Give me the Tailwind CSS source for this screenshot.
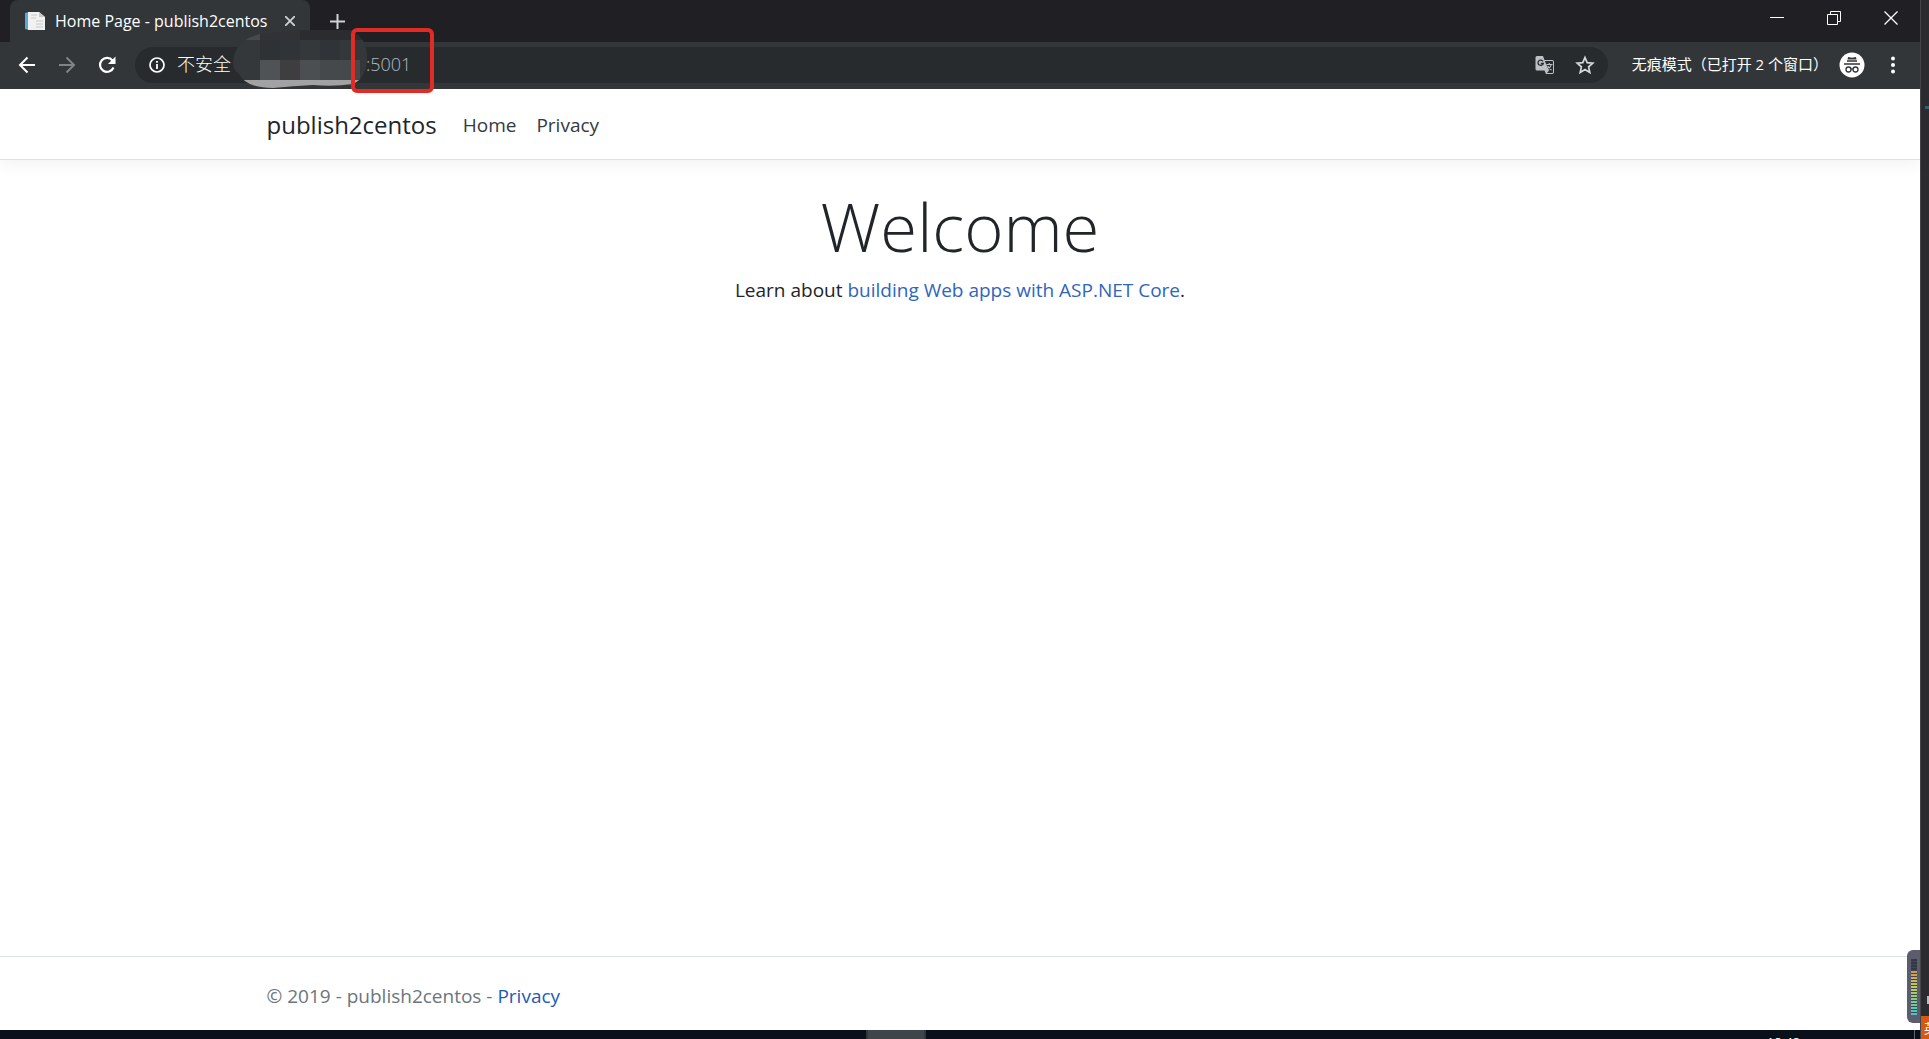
<!DOCTYPE html>
<html lang="zh-CN">
<head>
<meta charset="utf-8">
<title>Home Page - publish2centos</title>
<script src="https://cdn.jsdelivr.net/npm/@tailwindcss/browser@4"></script>
</head>
<body class="flex h-screen overflow-hidden bg-[#2c2c2f] font-['Open_Sans','Noto_Sans_CJK_SC',sans-serif]">
<div class="relative flex min-w-0 flex-1 flex-col">

  <!-- Browser chrome -->
  <div class="relative shrink-0 text-white">
    <div class="flex h-[42px] items-stretch bg-[#202024] pr-px pl-[10px]">
      <div class="flex w-[300px] items-center rounded-t-lg bg-[#323639] pr-3 pl-[14px]">
        <svg class="h-5 w-[22px] shrink-0" viewBox="0 0 22 20"><path d="M1 2l4-1v18l-4-1z" fill="#5aa9d6"/><path d="M4 1h11l6 5v13H4z" fill="#f1f1f1"/><path d="M15 1v5h6" fill="#c9c9c9"/><path d="M7 4h6M7 7h5M12 10h7M12 13h7M12 16h7" stroke="#c4c9cc"/></svg>
        <span class="ml-[9px] min-w-0 flex-1 text-[16px] whitespace-nowrap">Home Page - publish2centos</span>
        <button class="grid size-4 place-items-center" aria-label="关闭标签页"><svg class="size-[10px]" viewBox="0 0 10 10"><path d="M0 0l10 10M10 0L0 10" stroke="#d0d2d4" stroke-width="1.8"/></svg></button>
      </div>
      <button class="ml-5 self-center" aria-label="新标签页"><svg class="size-[15px]" viewBox="0 0 15 15"><path d="M7.500 0v15M0 7.500h15" stroke="#d0d2d4" stroke-width="2"/></svg></button>
      <div class="ml-auto flex h-9 items-center">
        <button class="grid w-[57px] place-items-center" aria-label="最小化"><svg class="size-[14px]" viewBox="0 0 14 14"><path d="M0 6.500h14" stroke="#fff"/></svg></button>
        <button class="grid w-[57px] place-items-center" aria-label="还原"><svg class="size-[14px]" viewBox="0 0 14 14"><path d="M.5 3.500h10v10H.5zM3.500 3V.5h10v10H11" fill="none" stroke="#fff"/></svg></button>
        <button class="grid w-[57px] place-items-center" aria-label="关闭"><svg class="size-[14px]" viewBox="0 0 14 14"><path d="M.5.5l13 13M13.500.5l-13 13" stroke="#fff" stroke-width="1.300"/></svg></button>
      </div>
    </div>
    <div class="flex h-[47px] items-center bg-[#323639] pr-[17px] pb-[2px] pl-[17px]">
      <button aria-label="后退"><svg class="size-5" viewBox="0 0 20 20"><path d="M18 10H3M10.500 2.500L3 10l7.500 7.500" fill="none" stroke="#fff" stroke-width="2"/></svg></button>
      <button class="ml-5" aria-label="前进"><svg class="size-5" viewBox="0 0 20 20"><path d="M2 10h15M9.500 2.500L17 10l-7.500 7.500" fill="none" stroke="#808386" stroke-width="2"/></svg></button>
      <button class="ml-5" aria-label="重新加载"><svg class="size-5" viewBox="0 0 20 20"><path d="M16.500 12.500A7 7 0 1 1 15.500 5.500" fill="none" stroke="#fff" stroke-width="2.200"/><path d="M18.500 1.500v7.500H11z" fill="#fff"/></svg></button>
      <div class="ml-[18px] flex h-9 flex-1 items-center rounded-full bg-[#282b2e] pr-[13px] pl-[14px]">
        <svg class="size-4 shrink-0" viewBox="0 0 16 16"><circle cx="8" cy="8" r="7" fill="none" stroke="#fff" stroke-width="1.700"/><path d="M8 7v5M8 4v1.800" stroke="#fff" stroke-width="1.800"/></svg>
        <label for="address" class="ml-3 w-[189px] shrink-0 text-[18px] font-light">不安全</label>
        <input id="address" value=":5001" class="min-w-0 flex-1 bg-transparent text-[18px] font-light text-[#b4b9be] outline-none">
        <button aria-label="翻译此页"><svg class="size-5" viewBox="0 0 20 20"><path d="M2 1h6l1.500 4H17a2 2 0 0 1 2 2v10a2 2 0 0 1-2 2h-6l-1.500-3.500H2a1.500 1.500 0 0 1-1.500-1.500V2.500A1.500 1.500 0 0 1 2 1z" fill="#bdc1c6"/><path d="M9.800 6H17a1 1 0 0 1 1 1v10a1 1 0 0 1-1 1h-5l2-2.500z" fill="#282b2e"/><path d="M8 6.300A2.700 2.700 0 1 0 8.300 8.500H5.800" fill="none" stroke="#282b2e" stroke-width="1.300"/><path d="M11.500 9.500h6M14.300 8v1.500M16.300 9.500c-.5 2.500-2 4-3.500 5M12.800 11c.8 1.800 2 3 3.700 4" fill="none" stroke="#bdc1c6" stroke-width="1.100"/></svg></button>
        <button class="ml-5" aria-label="为此标签页添加书签"><svg class="size-5" viewBox="0 0 20 20"><path d="M10 2.500l2.200 5.200 5.600.5-4.200 3.700 1.200 5.500-4.800-2.900-4.800 2.900 1.200-5.500-4.200-3.700 5.600-.5z" fill="none" stroke="#d5d7da" stroke-width="1.700"/></svg></button>
      </div>
      <button class="ml-6 flex items-center text-[15px] whitespace-nowrap"><span>无痕模式（已打开 2 个窗口）</span>
        <svg class="ml-[11px] size-[26px]" viewBox="0 0 26 26"><circle cx="13" cy="13" r="12.500" fill="#fff"/><path d="M9 5l4 .8 4-.8.500 2.500h-9z" fill="#323639"/><path d="M8 9h10M5 12h16" stroke="#323639" stroke-width="1.300"/><g fill="none" stroke="#323639" stroke-width="1.300"><circle cx="9.500" cy="17.500" r="2.500"/><circle cx="16.500" cy="17.500" r="2.500"/><path d="M12 17.300q1-.8 2 0"/></g></svg>
      </button>
      <button class="ml-[18px]" aria-label="菜单"><svg class="h-5 w-5" viewBox="0 0 20 20"><g fill="#fff"><circle cx="10" cy="3.500" r="2"/><circle cx="10" cy="10" r="2"/><circle cx="10" cy="16.500" r="2"/></g></svg></button>
    </div>

    <!-- Mosaic over the host name and the box around the port -->
    <svg class="absolute top-[28px] left-[230px] h-[62px] w-[140px]" viewBox="0 0 140 62">
      <defs><clipPath id="blob"><path d="M3 34Q5 12 30 6L70 2h50q17 8 17 26 0 22-14 28-20 3-40 1-20 1-40 3Q16 60 9 46 3 42 3 34z"/></clipPath></defs>
      <g clip-path="url(#blob)"><rect width="140" height="62" fill="#35383b"/><path d="M0 0h30v12H0z" fill="#46494d"/><path d="M30 0h40v12H30z" fill="#303236"/><path d="M70 0h70v12H70z" fill="#2b2c30"/><path d="M30 12h20v20H30z" fill="#2f3235"/><path d="M50 12h20v20H50zM90 12h20v20H90z" fill="#303337"/><path d="M30 32h20v20H30z" fill="#505356"/><path d="M50 32h20v20H50z" fill="#3e3e40"/><path d="M70 32h20v20H70z" fill="#4c4f52"/><path d="M90 32h40v20H90z" fill="#46494c"/><path d="M0 52h140v10H0z" fill="#a2a2a2"/></g>
    </svg>
    <div class="absolute top-[28px] left-[351px] h-[65px] w-[83px] rounded-md border-4 border-[#e32b26]"></div>
  </div>

  <!-- Page -->
  <div class="flex min-h-0 flex-1 flex-col bg-white text-[19px] leading-[30px] text-[#212529]">
    <header class="border-b border-[#dee2e6] shadow-[0_5px_15px_rgba(0,0,0,0.05)]">
      <nav class="mx-auto flex h-[70px] max-w-[1425px] items-center px-[19px] pt-[2px]">
        <a href="#" class="text-[24px] text-[#212529]">publish2centos</a>
        <a href="#" class="ml-[26px] text-[#343a40]">Home</a>
        <a href="#" class="ml-5 text-[#343a40]">Privacy</a>
      </nav>
    </header>
    <main class="flex-1 pt-6 text-center">
      <h1 class="text-[67px] leading-[84px] font-light">Welcome</h1>
      <p class="mt-[7px]">Learn about <a href="#" class="text-[#2f65bd]">building Web apps with ASP.NET Core</a>.</p>
    </main>
    <footer class="border-t border-[#dee2e6] text-[#6c757d]">
      <div class="mx-auto flex h-[73px] max-w-[1425px] items-center px-[19px] pt-1"><p>© 2019 - publish2centos - <a href="#" class="text-[#1b5bb8]">Privacy</a></p></div>
    </footer>
  </div>

  <!-- Desktop taskbar, cut by the screen edge -->
  <div class="relative flex h-[9px] shrink-0 overflow-hidden bg-[#0a101a]">
    <div class="ml-[866px] w-[60px] border-x-2 border-[#30373b] bg-[#3f4649]"></div>
    <span class="mr-[120px] ml-auto pt-1 text-[13px] leading-4 text-white">18:48</span>
    <div class="absolute right-[5px] h-full w-px bg-[#60656c]"></div>
  </div>

  <!-- Level meter docked to the window edge -->
  <div class="absolute right-0 bottom-4 flex h-[73px] w-[13px] flex-col items-center rounded-l-md bg-[#5b5d6c] pt-[9px]">
    <svg class="h-[56px] w-[6px]" viewBox="0 0 6 56"><defs><linearGradient id="level" x1="0" y1="0" x2="0" y2="1"><stop offset=".2" stop-color="#343748"/><stop offset=".22" stop-color="#c79a5a"/><stop offset=".5" stop-color="#c3cc55"/><stop offset="1" stop-color="#42c4cc"/></linearGradient><pattern id="bars" width="6" height="3" patternUnits="userSpaceOnUse"><path d="M0 2.500h6" stroke="#414453"/></pattern></defs><path d="M0 0h6v56H0z" fill="url(#level)"/><path d="M0 0h6v56H0z" fill="url(#bars)"/></svg>
  </div>
</div>

<!-- Sliver of the window behind -->
<aside class="flex w-[9px] shrink-0 flex-col justify-between overflow-hidden border-l border-[#46464a] bg-[#2c2c30]">
  <div class="mt-[106px] ml-1 h-[3px] bg-[#2c6474]"></div>
  <div>
    <div class="mb-3 ml-[6px] h-2 bg-[#b8bcc0]"></div>
    <div class="h-[23px] bg-[#d35a10] pt-1 pl-[3px] text-[13px] leading-4 text-white">英</div>
  </div>
</aside>
</body>
</html>
